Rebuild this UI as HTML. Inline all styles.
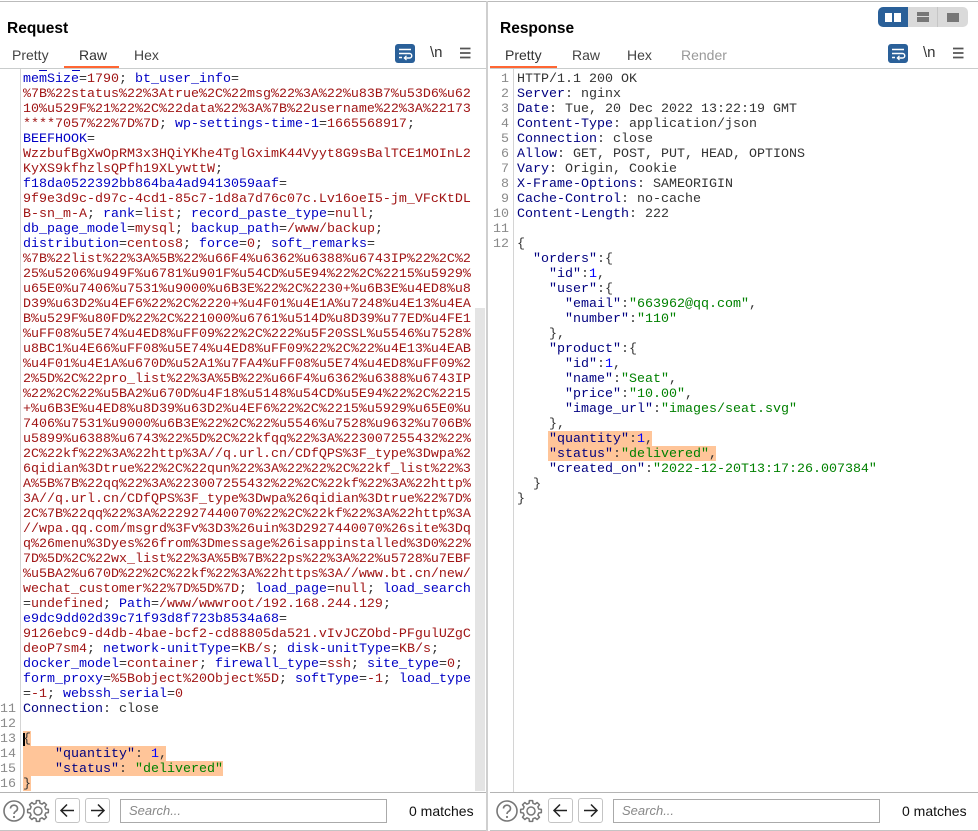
<!DOCTYPE html>
<html>
<head>
<meta charset="utf-8">
<style>
html,body{margin:0;padding:0;background:#fff;}
body{width:978px;height:831px;position:relative;overflow:hidden;font-family:"Liberation Sans",sans-serif;}
.a{position:absolute;}
.t{position:absolute;white-space:pre;}
.title{font-size:15.5px;font-weight:bold;color:#000;top:20px;line-height:18px;}
.tab{font-size:14px;color:#444;top:47px;line-height:17px;}
pre{position:absolute;margin:0;font-family:"Liberation Mono",monospace;font-size:13.333px;line-height:15px;color:#333;white-space:pre;}
.n{color:#0000c4;}
.v{color:#a01515;}
.h{color:#000080;}
.s{color:#008000;}
.b{color:#0000ff;}
.ln{color:#8a8a8a;text-align:right;width:16px;}
.btn{position:absolute;box-sizing:border-box;width:25px;height:25px;top:798px;border:1px solid #c4c4c4;border-radius:3px;background:#fff;}
.search{position:absolute;box-sizing:border-box;top:799px;width:267px;height:24px;border:1px solid #aaa;background:#fff;font-size:13px;font-style:italic;color:#888;padding-left:8px;line-height:22px;}
.m{position:absolute;top:803px;font-size:14px;line-height:17px;color:#111;white-space:pre;}
.nl{font-size:15px;line-height:17px;color:#333;top:44px;}
</style>
</head>
<body>
<!-- frame -->
<div class="a" style="left:0;top:1px;width:978px;height:1px;background:#bbb"></div>
<div class="a" style="left:486px;top:1px;width:2px;height:830px;background:#cfcfcf"></div>
<div class="a" style="left:0;top:68px;width:486px;height:1px;background:#c9cccc"></div>
<div class="a" style="left:490px;top:68px;width:488px;height:1px;background:#c9cccc"></div>
<div class="a" style="left:64px;top:66px;width:55px;height:2px;background:#ff6633"></div>
<div class="a" style="left:490px;top:66px;width:67px;height:2px;background:#ff6633"></div>

<div class="t title" style="left:7px">Request</div>
<div class="t title" style="left:500px">Response</div>

<div class="t tab" style="left:12px">Pretty</div>
<div class="t tab" style="left:79px;color:#333">Raw</div>
<div class="t tab" style="left:134px">Hex</div>
<div class="t tab" style="left:505px;color:#333">Pretty</div>
<div class="t tab" style="left:572px">Raw</div>
<div class="t tab" style="left:627px">Hex</div>
<div class="t tab" style="left:681px;color:#999">Render</div>

<!-- layout toggle -->
<svg class="a" style="left:878px;top:7px" width="90" height="20" viewBox="0 0 90 20">
<path d="M5 0H30V20H5A5 5 0 0 1 0 15V5A5 5 0 0 1 5 0Z" fill="#2a6099"/>
<path d="M30 0H85A5 5 0 0 1 90 5V15A5 5 0 0 1 85 20H30Z" fill="#dadada"/>
<rect x="59" y="0" width="1" height="20" fill="#c6c6c6"/>
<rect x="7" y="6" width="7" height="9" fill="#fff"/><rect x="16" y="6" width="7" height="9" fill="#fff"/>
<rect x="39" y="5" width="12" height="4" fill="#777"/><rect x="39" y="10" width="12" height="5" fill="#777"/>
<rect x="69" y="6" width="12" height="9" fill="#777"/>
</svg>

<!-- request toolbar icons -->
<svg class="a" style="left:395px;top:44px" width="20" height="19" viewBox="0 0 20 19">
<rect width="20" height="19" rx="3" fill="#2a6099"/>
<path d="M4 5.5H16M4 9.5H14.5A2.2 2.2 0 0 1 14.5 14H10M4 13.5H7" stroke="#fff" stroke-width="1.4" fill="none"/>
<path d="M11.5 11.8L9.3 14L11.5 16" stroke="#fff" stroke-width="1.2" fill="none"/>
</svg>
<div class="t nl" style="left:430px">\n</div>
<svg class="a" style="left:460px;top:47px" width="11" height="12" viewBox="0 0 11 12"><path d="M0 1.5H10.5M0 6H10.5M0 10.5H10.5" stroke="#555" stroke-width="1.8"/></svg>

<!-- response toolbar icons -->
<svg class="a" style="left:888px;top:44px" width="20" height="19" viewBox="0 0 20 19">
<rect width="20" height="19" rx="3" fill="#2a6099"/>
<path d="M4 5.5H16M4 9.5H14.5A2.2 2.2 0 0 1 14.5 14H10M4 13.5H7" stroke="#fff" stroke-width="1.4" fill="none"/>
<path d="M11.5 11.8L9.3 14L11.5 16" stroke="#fff" stroke-width="1.2" fill="none"/>
</svg>
<div class="t nl" style="left:923px">\n</div>
<svg class="a" style="left:953px;top:47px" width="11" height="12" viewBox="0 0 11 12"><path d="M0 1.5H10.5M0 6H10.5M0 10.5H10.5" stroke="#555" stroke-width="1.8"/></svg>

<!-- gutters -->
<div class="a" style="left:20px;top:69px;width:1px;height:723px;background:#d4d4d4"></div>
<div class="a" style="left:513px;top:69px;width:1px;height:723px;background:#d4d4d4"></div>

<!-- scrollbar -->
<div class="a" style="left:475px;top:308px;width:10px;height:483px;background:#e4e4e4"></div>

<!-- highlights request -->
<div class="a" style="left:23px;top:731px;width:8px;height:15px;background:#ffc599"></div>
<div class="a" style="left:23px;top:746px;width:143px;height:15px;background:#ffc599"></div>
<div class="a" style="left:23px;top:761px;width:200px;height:15px;background:#ffc599"></div>
<div class="a" style="left:23px;top:776px;width:8px;height:15px;background:#ffc599"></div>
<div class="a" style="left:23px;top:733px;width:2px;height:13px;background:#000"></div>

<!-- highlights response -->
<div class="a" style="left:548px;top:431px;width:104px;height:15px;background:#ffc599"></div>
<div class="a" style="left:548px;top:446px;width:168px;height:15px;background:#ffc599"></div>

<!-- clipped partial line -->
<div class="a" style="left:39px;top:70px;width:8px;height:1px;background:#0000c4"></div>
<div class="a" style="left:72px;top:70px;width:8px;height:1px;background:#0000c4"></div>

<!-- line numbers request -->
<pre class="ln" style="left:0;top:702px">11
12
13
14
15
16</pre>

<!-- request text -->
<pre style="left:23px;top:72px"><span class="n">memSize</span>=<span class="v">1790</span>; <span class="n">bt_user_info</span>=
<span class="v">%7B%22status%22%3Atrue%2C%22msg%22%3A%22%u83B7%u53D6%u62</span>
<span class="v">10%u529F%21%22%2C%22data%22%3A%7B%22username%22%3A%22173</span>
<span class="v">****7057%22%7D%7D</span>; <span class="n">wp-settings-time-1</span>=<span class="v">1665568917</span>;
<span class="n">BEEFHOOK</span>=
<span class="v">WzzbufBgXwOpRM3x3HQiYKhe4TglGximK44Vyyt8G9sBalTCE1MOInL2</span>
<span class="v">KyXS9kfhzlsQPfh19XLywttW</span>;
<span class="n">f18da0522392bb864ba4ad9413059aaf</span>=
<span class="v">9f9e3d9c-d97c-4cd1-85c7-1d8a7d76c07c.Lv16oeI5-jm_VFcKtDL</span>
<span class="v">B-sn_m-A</span>; <span class="n">rank</span>=<span class="v">list</span>; <span class="n">record_paste_type</span>=<span class="v">null</span>;
<span class="n">db_page_model</span>=<span class="v">mysql</span>; <span class="n">backup_path</span>=<span class="v">/www/backup</span>;
<span class="n">distribution</span>=<span class="v">centos8</span>; <span class="n">force</span>=<span class="v">0</span>; <span class="n">soft_remarks</span>=
<span class="v">%7B%22list%22%3A%5B%22%u66F4%u6362%u6388%u6743IP%22%2C%2</span>
<span class="v">25%u5206%u949F%u6781%u901F%u54CD%u5E94%22%2C%2215%u5929%</span>
<span class="v">u65E0%u7406%u7531%u9000%u6B3E%22%2C%2230+%u6B3E%u4ED8%u8</span>
<span class="v">D39%u63D2%u4EF6%22%2C%2220+%u4F01%u4E1A%u7248%u4E13%u4EA</span>
<span class="v">B%u529F%u80FD%22%2C%221000%u6761%u514D%u8D39%u77ED%u4FE1</span>
<span class="v">%uFF08%u5E74%u4ED8%uFF09%22%2C%222%u5F20SSL%u5546%u7528%</span>
<span class="v">u8BC1%u4E66%uFF08%u5E74%u4ED8%uFF09%22%2C%22%u4E13%u4EAB</span>
<span class="v">%u4F01%u4E1A%u670D%u52A1%u7FA4%uFF08%u5E74%u4ED8%uFF09%2</span>
<span class="v">2%5D%2C%22pro_list%22%3A%5B%22%u66F4%u6362%u6388%u6743IP</span>
<span class="v">%22%2C%22%u5BA2%u670D%u4F18%u5148%u54CD%u5E94%22%2C%2215</span>
<span class="v">+%u6B3E%u4ED8%u8D39%u63D2%u4EF6%22%2C%2215%u5929%u65E0%u</span>
<span class="v">7406%u7531%u9000%u6B3E%22%2C%22%u5546%u7528%u9632%u706B%</span>
<span class="v">u5899%u6388%u6743%22%5D%2C%22kfqq%22%3A%223007255432%22%</span>
<span class="v">2C%22kf%22%3A%22http%3A//q.url.cn/CDfQPS%3F_type%3Dwpa%2</span>
<span class="v">6qidian%3Dtrue%22%2C%22qun%22%3A%22%22%2C%22kf_list%22%3</span>
<span class="v">A%5B%7B%22qq%22%3A%223007255432%22%2C%22kf%22%3A%22http%</span>
<span class="v">3A//q.url.cn/CDfQPS%3F_type%3Dwpa%26qidian%3Dtrue%22%7D%</span>
<span class="v">2C%7B%22qq%22%3A%222927440070%22%2C%22kf%22%3A%22http%3A</span>
<span class="v">//wpa.qq.com/msgrd%3Fv%3D3%26uin%3D2927440070%26site%3Dq</span>
<span class="v">q%26menu%3Dyes%26from%3Dmessage%26isappinstalled%3D0%22%</span>
<span class="v">7D%5D%2C%22wx_list%22%3A%5B%7B%22ps%22%3A%22%u5728%u7EBF</span>
<span class="v">%u5BA2%u670D%22%2C%22kf%22%3A%22https%3A//www.bt.cn/new/</span>
<span class="v">wechat_customer%22%7D%5D%7D</span>; <span class="n">load_page</span>=<span class="v">null</span>; <span class="n">load_search</span>
=<span class="v">undefined</span>; <span class="n">Path</span>=<span class="v">/www/wwwroot/192.168.244.129</span>;
<span class="n">e9dc9dd02d39c71f93d8f723b8534a68</span>=
<span class="v">9126ebc9-d4db-4bae-bcf2-cd88805da521.vIvJCZObd-PFgulUZgC</span>
<span class="v">deoP7sm4</span>; <span class="n">network-unitType</span>=<span class="v">KB/s</span>; <span class="n">disk-unitType</span>=<span class="v">KB/s</span>;
<span class="n">docker_model</span>=<span class="v">container</span>; <span class="n">firewall_type</span>=<span class="v">ssh</span>; <span class="n">site_type</span>=<span class="v">0</span>;
<span class="n">form_proxy</span>=<span class="v">%5Bobject%20Object%5D</span>; <span class="n">softType</span>=<span class="v">-1</span>; <span class="n">load_type</span>
=<span class="v">-1</span>; <span class="n">webssh_serial</span>=<span class="v">0</span>
<span class="h">Connection</span>: close

{
    <span class="h">"quantity"</span>: <span class="b">1</span>,
    <span class="h">"status"</span>: <span class="s">"delivered"</span>
}</pre>

<!-- line numbers response -->
<pre class="ln" style="left:493px;top:72px"> 1
 2
 3
 4
 5
 6
 7
 8
 9
10
11
12</pre>

<!-- response text -->
<pre style="left:517px;top:72px">HTTP/1.1 200 OK
<span class="h">Server</span>: nginx
<span class="h">Date</span>: Tue, 20 Dec 2022 13:22:19 GMT
<span class="h">Content-Type</span>: application/json
<span class="h">Connection</span>: close
<span class="h">Allow</span>: GET, POST, PUT, HEAD, OPTIONS
<span class="h">Vary</span>: Origin, Cookie
<span class="h">X-Frame-Options</span>: SAMEORIGIN
<span class="h">Cache-Control</span>: no-cache
<span class="h">Content-Length</span>: 222

{
  <span class="h">"orders"</span>:{
    <span class="h">"id"</span>:<span class="b">1</span>,
    <span class="h">"user"</span>:{
      <span class="h">"email"</span>:<span class="s">"663962@qq.com"</span>,
      <span class="h">"number"</span>:<span class="s">"110"</span>
    },
    <span class="h">"product"</span>:{
      <span class="h">"id"</span>:<span class="b">1</span>,
      <span class="h">"name"</span>:<span class="s">"Seat"</span>,
      <span class="h">"price"</span>:<span class="s">"10.00"</span>,
      <span class="h">"image_url"</span>:<span class="s">"images/seat.svg"</span>
    },
    <span class="h">"quantity"</span>:<span class="b">1</span>,
    <span class="h">"status"</span>:<span class="s">"delivered"</span>,
    <span class="h">"created_on"</span>:<span class="s">"2022-12-20T13:17:26.007384"</span>
  }
}</pre>

<!-- footer lines -->
<div class="a" style="left:0;top:792px;width:486px;height:1px;background:#b4b4b4"></div>
<div class="a" style="left:490px;top:792px;width:488px;height:1px;background:#b4b4b4"></div>
<div class="a" style="left:0;top:830px;width:486px;height:1px;background:#c4c4c4"></div>
<div class="a" style="left:490px;top:830px;width:488px;height:1px;background:#c4c4c4"></div>

<!-- footer left -->
<svg class="a" style="left:2px;top:799px" width="50" height="24" viewBox="0 0 50 24">
<circle cx="12" cy="12" r="10" fill="none" stroke="#777" stroke-width="1.6"/>
<path d="M8.5 9.5A3.5 3.3 0 1 1 13.8 12.3C12.6 13 12 13.6 12 15" fill="none" stroke="#777" stroke-width="1.6"/>
<circle cx="12" cy="18" r="1.1" fill="#777"/>
<g transform="translate(36 12)" fill="none" stroke="#777" stroke-width="1.5" stroke-linejoin="round">
<circle r="4"/>
<path d="M7.76-1.94L10.37-1.64V1.64L7.76 1.94L6.86 4.12L8.49 6.17L6.17 8.49L4.12 6.86L1.94 7.76L1.64 10.37H-1.64L-1.94 7.76L-4.12 6.86L-6.17 8.49L-8.49 6.17L-6.86 4.12L-7.76 1.94L-10.37 1.64V-1.64L-7.76-1.94L-6.86-4.12L-8.49-6.17L-6.17-8.49L-4.12-6.86L-1.94-7.76L-1.64-10.37H1.64L1.94-7.76L4.12-6.86L6.17-8.49L8.49-6.17L6.86-4.12Z"/>
</g>
</svg>
<div class="btn" style="left:55px"><svg width="23" height="23" viewBox="0 0 23 23"><path d="M18 11.5H5M11 5.5L5 11.5L11 17.5" fill="none" stroke="#222" stroke-width="1.5"/></svg></div>
<div class="btn" style="left:85px"><svg width="23" height="23" viewBox="0 0 23 23"><path d="M5 11.5H18M12 5.5L18 11.5L12 17.5" fill="none" stroke="#222" stroke-width="1.5"/></svg></div>
<div class="search" style="left:120px">Search...</div>
<div class="m" style="left:409px">0 matches</div>

<!-- footer right -->
<svg class="a" style="left:495px;top:799px" width="50" height="24" viewBox="0 0 50 24">
<circle cx="12" cy="12" r="10" fill="none" stroke="#777" stroke-width="1.6"/>
<path d="M8.5 9.5A3.5 3.3 0 1 1 13.8 12.3C12.6 13 12 13.6 12 15" fill="none" stroke="#777" stroke-width="1.6"/>
<circle cx="12" cy="18" r="1.1" fill="#777"/>
<g transform="translate(36 12)" fill="none" stroke="#777" stroke-width="1.5" stroke-linejoin="round">
<circle r="4"/>
<path d="M7.76-1.94L10.37-1.64V1.64L7.76 1.94L6.86 4.12L8.49 6.17L6.17 8.49L4.12 6.86L1.94 7.76L1.64 10.37H-1.64L-1.94 7.76L-4.12 6.86L-6.17 8.49L-8.49 6.17L-6.86 4.12L-7.76 1.94L-10.37 1.64V-1.64L-7.76-1.94L-6.86-4.12L-8.49-6.17L-6.17-8.49L-4.12-6.86L-1.94-7.76L-1.64-10.37H1.64L1.94-7.76L4.12-6.86L6.17-8.49L8.49-6.17L6.86-4.12Z"/>
</g>
</svg>
<div class="btn" style="left:548px"><svg width="23" height="23" viewBox="0 0 23 23"><path d="M18 11.5H5M11 5.5L5 11.5L11 17.5" fill="none" stroke="#222" stroke-width="1.5"/></svg></div>
<div class="btn" style="left:578px"><svg width="23" height="23" viewBox="0 0 23 23"><path d="M5 11.5H18M12 5.5L18 11.5L12 17.5" fill="none" stroke="#222" stroke-width="1.5"/></svg></div>
<div class="search" style="left:613px">Search...</div>
<div class="m" style="left:902px">0 matches</div>
</body>
</html>
